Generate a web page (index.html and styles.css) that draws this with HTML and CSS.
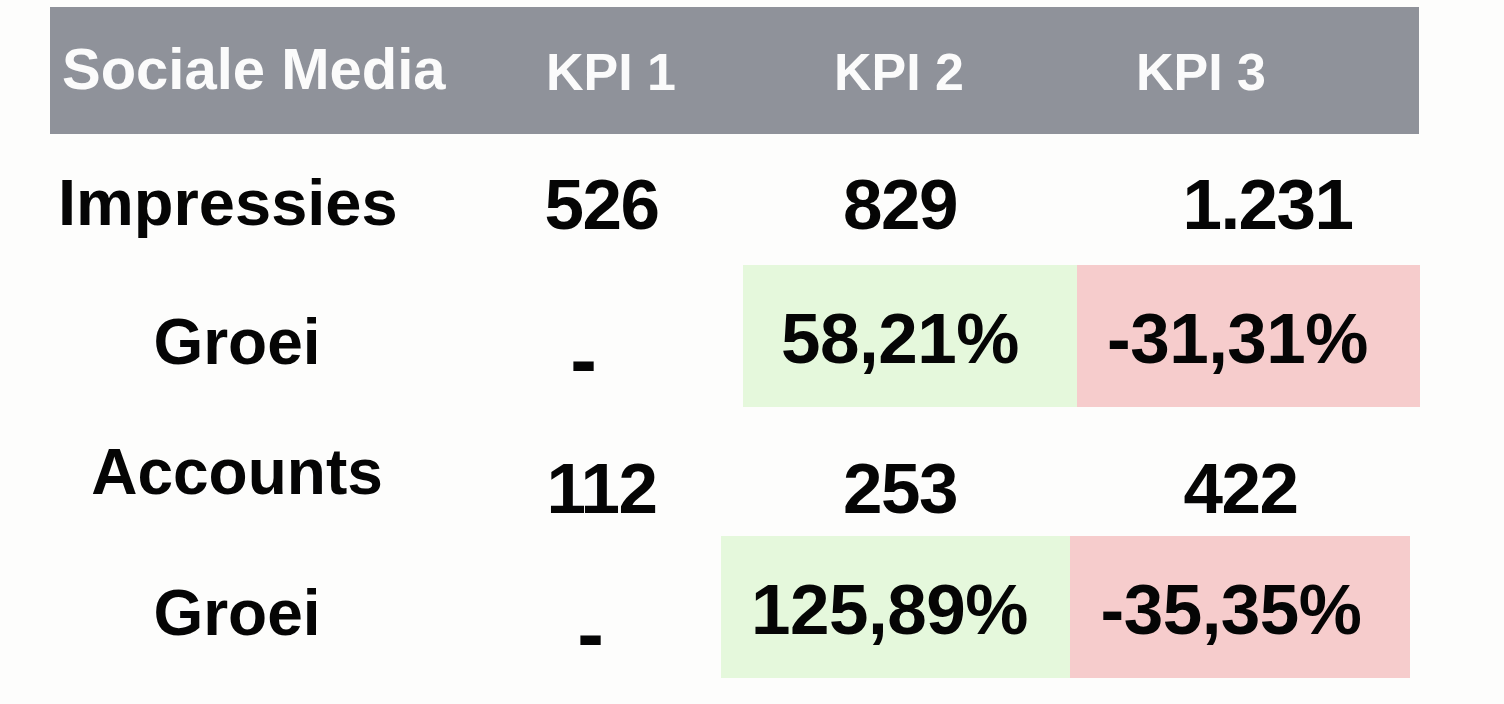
FILE: index.html
```html
<!DOCTYPE html>
<html lang="nl">

<head>
    <meta charset="UTF-8">
    <meta name="viewport" content="width=device-width, initial-scale=1.0">
    <title>Sociale Media KPI</title>
    <link rel="stylesheet" href="styles.css">
</head>

<body>

    <div class="sheet">
        <!-- Header -->
        <div class="head-row">
            <div class="head head-title">Sociale Media</div>
            <div class="head">KPI 1</div>
            <div class="head">KPI 2</div>
            <div class="head">KPI 3</div>
        </div>

        <div class="row row-impressies">
            <div class="cell label label-start">Impressies</div>
            <div class="cell num">526</div>
            <div class="cell num pr-20">829</div>
            <div class="cell num pl-38">1.231</div>
        </div>

        <div class="row row-growth">
            <div class="cell label">Groei</div>
            <div class="cell dash pr-36">-</div>
            <div class="cell pct good pr-20">58,21%</div>
            <div class="cell pct bad pr-22">-31,31%</div>
        </div>

        <div class="row row-accounts">
            <div class="cell label">Accounts</div>
            <div class="cell num">112</div>
            <div class="cell num pr-20">253</div>
            <div class="cell num pr-16">422</div>
        </div>

        <div class="row row-growth row-last">
            <div class="cell label">Groei</div>
            <div class="cell dash">-</div>
            <div class="cell pct good pr-12">125,89%</div>
            <div class="cell pct bad pr-18">-35,35%</div>
        </div>
    </div>

</body>

</html>
```

FILE: styles.css
```css
body {
    margin: 0;
    padding: 7px 0 0 50px;
    background: #fdfdfc;
    font-family: "Liberation Sans", Arial, sans-serif;
    color: #050505;
    overflow: hidden;
}

.sheet {
    width: 1370px;
}

/* Header bar */
.head-row {
    display: grid;
    grid-template-columns: 420px 282px 294px 310px;
    width: 1369px;
    height: 127px;
    background: #8f929a;
}

.head {
    font-size: 52px;
    font-weight: bold;
    line-height: 1;
    color: #fbfbfb;
    text-align: center;
    padding-top: 39px;
}

.head-title {
    font-size: 58px;
    text-align: left;
    padding-left: 12px;
    padding-top: 33px;
}

/* Body rows */
.row {
    display: grid;
    grid-template-columns: 410px 283px 334px 343px;
}

.cell {
    font-weight: bold;
    line-height: 1;
    text-align: center;
    white-space: nowrap;
}

.label {
    font-size: 64px;
    padding-right: 36px;
}

.label-start {
    font-size: 65px;
    text-align: left;
    padding-left: 8px;
    padding-right: 0;
}

.num {
    font-size: 71px;
    letter-spacing: -1.5px;
}

.pct {
    font-size: 71px;
    letter-spacing: -0.5px;
}

.dash {
    font-size: 80px;
}

.good {
    background: #e5f8dc;
}

.bad {
    background: #f6cccc;
}

.row-impressies {
    height: 131px;
}

.row-impressies .label {
    padding-top: 36px;
}

.row-impressies .num {
    padding-top: 35px;
}

.row-growth {
    height: 142px;
}

.row-growth .label {
    padding-top: 45px;
}

.row-growth .pct {
    padding-top: 38px;
}

.row-growth .dash {
    padding-top: 55px;
}

.row-accounts {
    height: 129px;
}

.row-accounts .label {
    padding-top: 33px;
}

.row-accounts .num {
    padding-top: 46px;
}

.row-last {
    grid-template-columns: 410px 261px 349px 340px;
}

.row-last .dash {
    padding-top: 58px;
}

/* small nudges */
.pr-12 { padding-right: 12px; }
.pr-16 { padding-right: 16px; }
.pr-18 { padding-right: 18px; }
.pr-20 { padding-right: 20px; }
.pr-22 { padding-right: 22px; }
.pr-36 { padding-right: 36px; }
.pl-38 { padding-left: 38px; }
```
